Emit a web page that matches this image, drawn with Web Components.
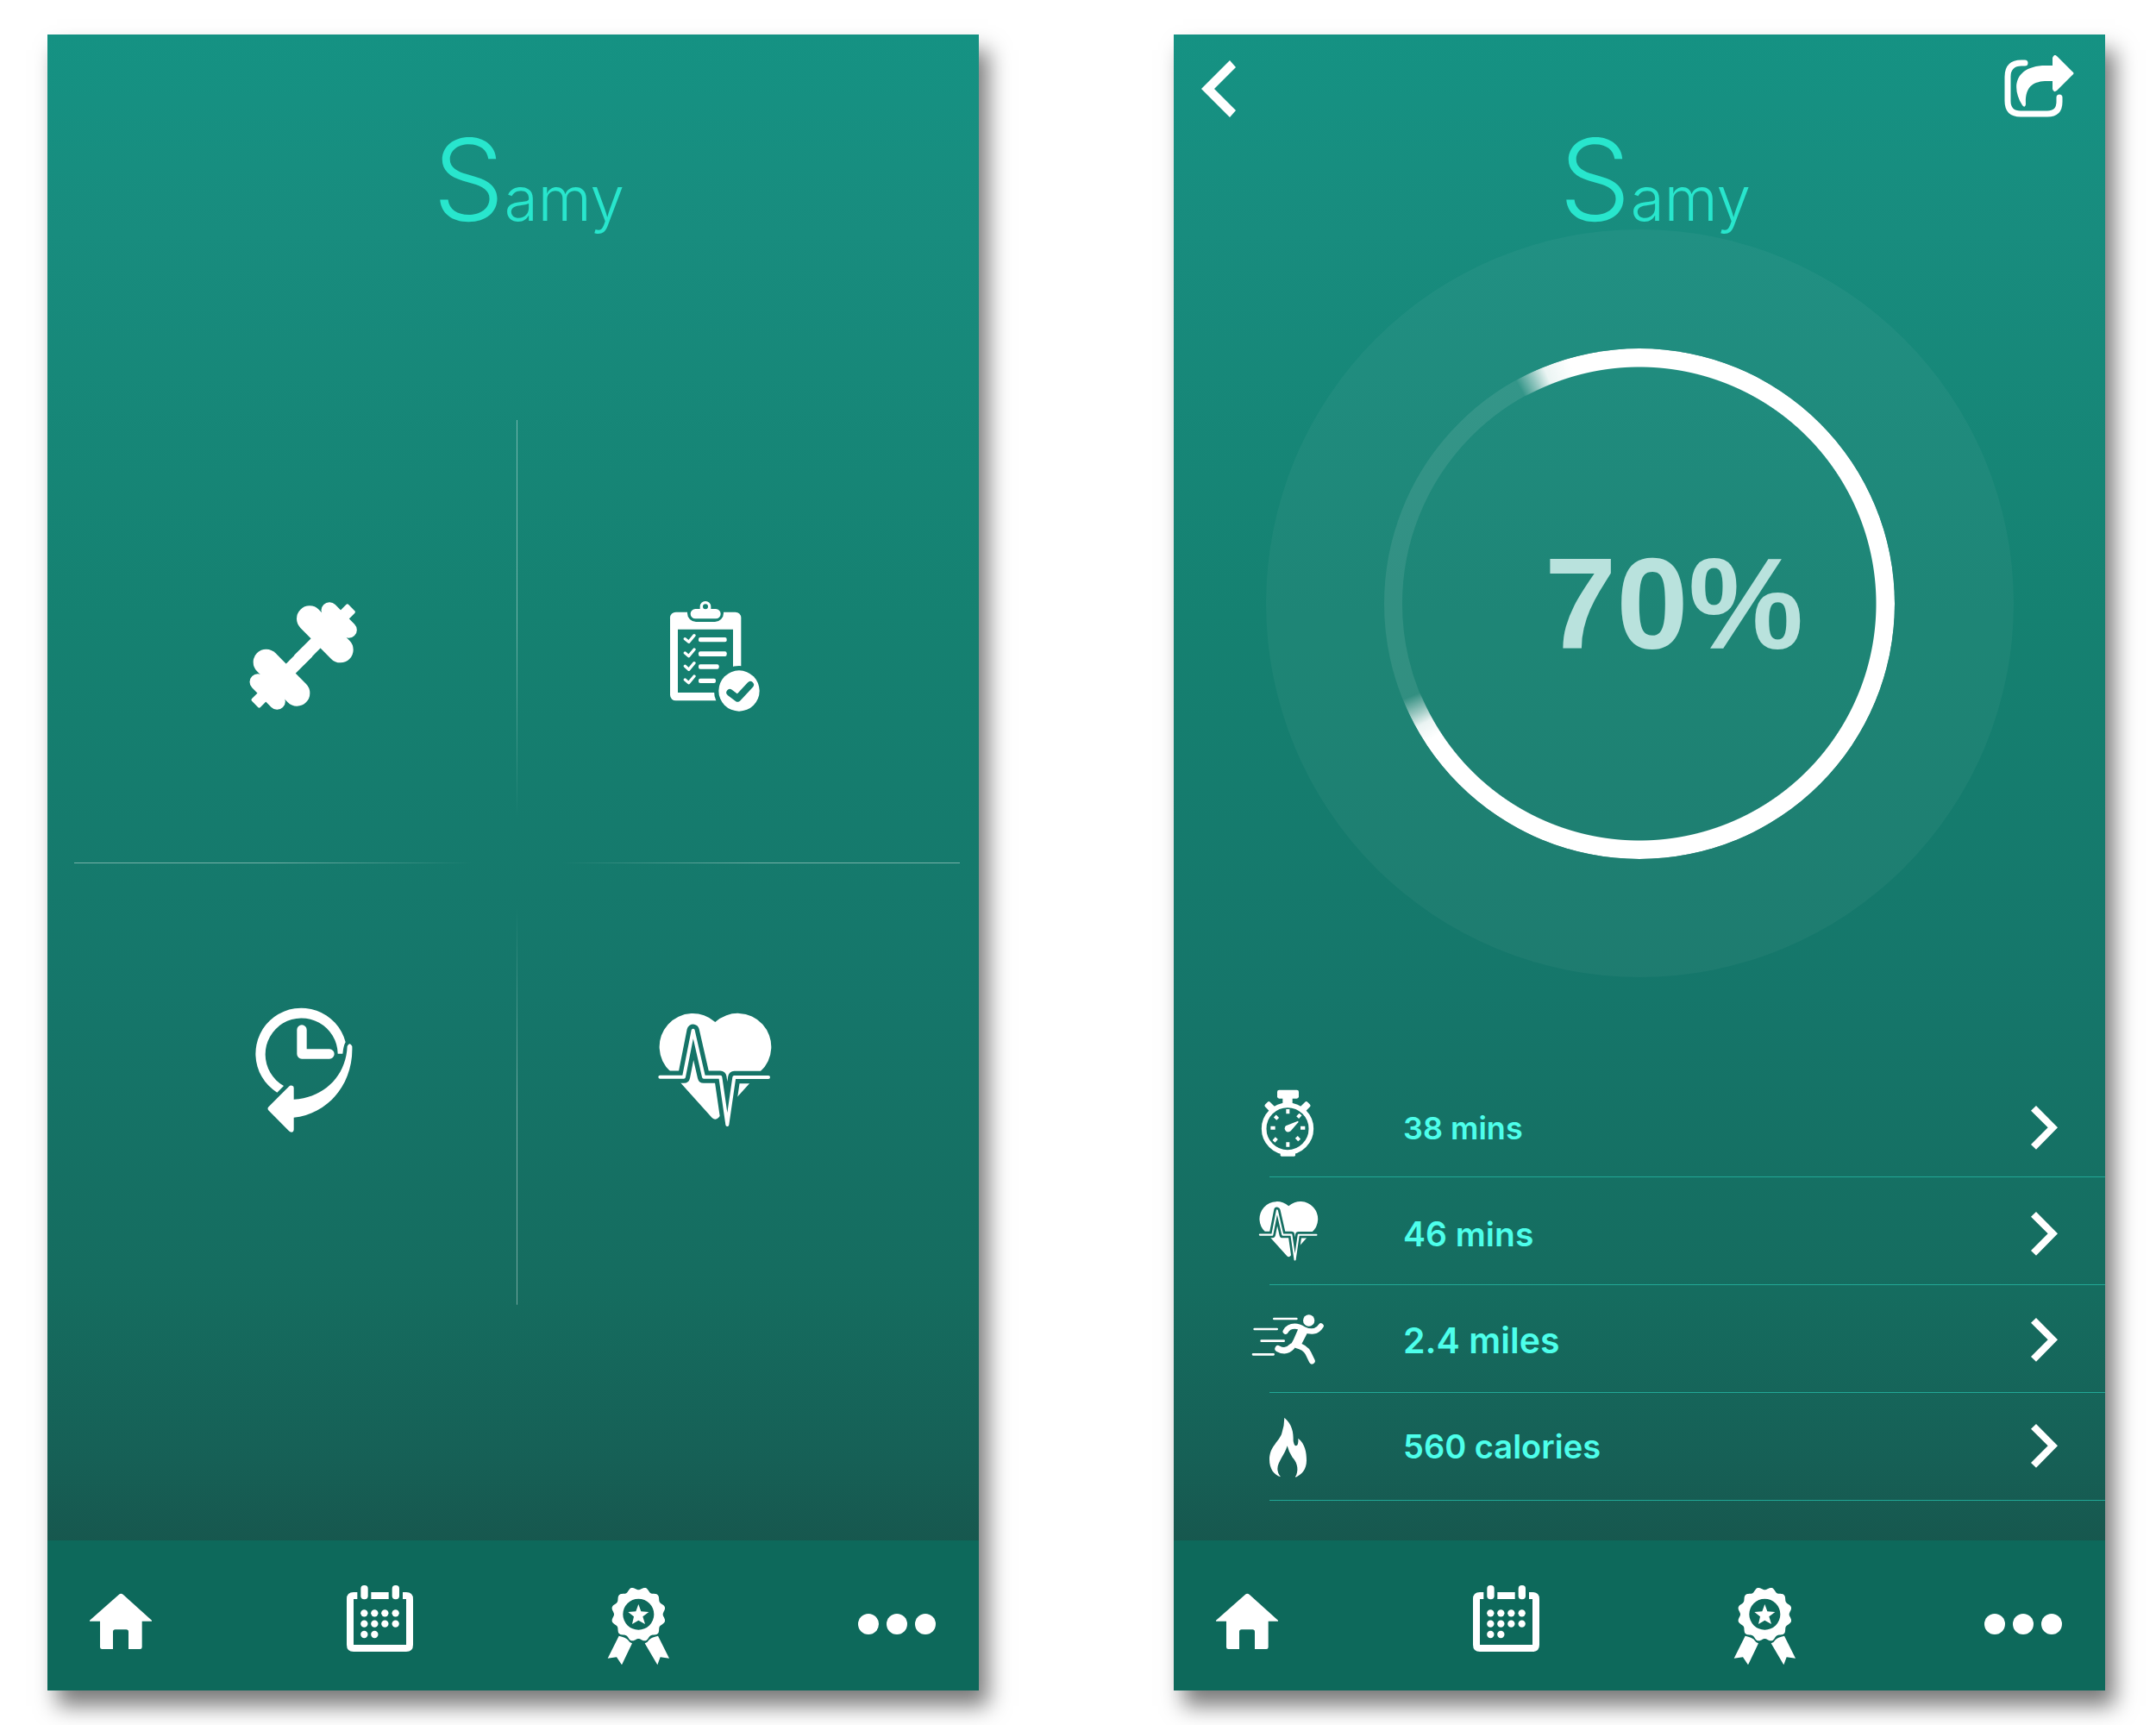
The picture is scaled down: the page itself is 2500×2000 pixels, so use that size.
<!DOCTYPE html>
<html lang="en">
<head>
<meta charset="utf-8">
<meta name="viewport" content="width=device-width, initial-scale=1">
<title>Samy</title>
<style>
  body {
    margin: 0;
    background: #fff;
    font-family: Inter, "Liberation Sans", sans-serif;
  }
  main {
    display: flex;
    gap: 226px;
    padding: 40px 59px 40px 55px;
  }
</style>
</head>
<body>
<main>
  <app-screen>
    <app-title slot="top" initial="S">amy</app-title>
    <quick-menu></quick-menu>
  </app-screen>
  <app-screen nav="back">
    <app-title slot="top" initial="S">amy</app-title>
    <progress-gauge>70%</progress-gauge>
    <stat-list>
      <stat-row icon="stopwatch" size="s">38 mins</stat-row>
      <stat-row icon="heart" size="l">46 mins</stat-row>
      <stat-row icon="runner" size="xl">2.4 miles</stat-row>
      <stat-row icon="flame" size="m">560 calories</stat-row>
    </stat-list>
  </app-screen>
</main>

<script>
/* Outline of the award rosette: a circle with twelve soft lobes. */
function rosette(cx, cy, r, depth) {
  let d = "";
  for (let i = 0; i < 240; i++) {
    const t = i / 240 * Math.PI * 2;
    const k = r - depth * Math.cos(12 * t);
    d += (i ? "L" : "M") + (cx + k * Math.sin(t)).toFixed(1) + " " + (cy - k * Math.cos(t)).toFixed(1);
  }
  return d + "Z";
}

const heartArt = `
  <mask id="h" maskUnits="userSpaceOnUse" x="0" y="0" width="560" height="560">
    <rect width="560" height="560" fill="#fff"/>
    <path d="M40 297H159L191 135L228 297H286L310 463L334 298H500" fill="none" stroke="#000" stroke-width="43" stroke-linejoin="round"/>
  </mask>
  <path mask="url(#h)" d="M268 106A116 116 0 0 0 112 278L257 439Q268 450 279 439L425 278A116 116 0 0 0 268 106Z"/>
  <path d="M76 297H159L191 135L228 297H286L310 463L334 298H453" fill="none" stroke="#fff" stroke-width="12" stroke-linejoin="round" stroke-linecap="round"/>`;

const ICONS = {
  dumbbell: { box: "6 3 540 540", art: `
    <g id="d" stroke="#fff" stroke-linecap="round">
      <path d="M297 145L404 253" stroke-width="90"/>
      <path d="M366 116L433 184" stroke-width="57"/>
      <rect x="-42" y="-21" width="72" height="42" rx="6" stroke="none" transform="translate(422 128) rotate(-45)"/>
      <path d="M260 289L350 199" stroke-width="47" stroke-linecap="butt"/>
    </g>
    <use href="#d" transform="rotate(180 275 274.500)"/>` },
  clipboard: { box: "-36 -27 540 540", art: `
    <mask id="b" maskUnits="userSpaceOnUse" x="0" y="0" width="480" height="480">
      <rect width="480" height="480" fill="#fff"/>
      <path d="M108 152H300V372H108Z" fill="#000"/>
      <rect x="141" y="50" width="126" height="76" rx="30" fill="#000"/>
      <circle cx="321" cy="366" r="87" fill="#000"/>
    </mask>
    <mask id="t" maskUnits="userSpaceOnUse" x="0" y="0" width="480" height="480">
      <rect width="480" height="480" fill="#fff"/>
      <path d="M289 372L316 392L360 345" fill="none" stroke="#000" stroke-width="24" stroke-linecap="round" stroke-linejoin="round"/>
    </mask>
    <rect mask="url(#b)" x="81" y="92" width="247" height="308" rx="20"/>
    <path fill-rule="evenodd" d="M185 81V73A19 19 0 0 1 223 73V81H240A17 17 0 0 1 240 115H169A17 17 0 0 1 169 81ZM195 73A9 9 0 1 0 213 73A9 9 0 1 0 195 73Z"/>
    <g fill="none" stroke="#fff" stroke-width="10" stroke-linecap="round" stroke-linejoin="round">
      <path d="M133 185L146 196L165 173M133 234L146 245L165 222M133 280L146 292L165 269M133 327L146 338L165 315"/>
    </g>
    <rect x="180" y="180" width="98" height="16" rx="6"/>
    <rect x="180" y="229" width="98" height="17" rx="6"/>
    <rect x="180" y="274" width="71" height="16" rx="6"/>
    <rect x="180" y="323" width="60" height="16" rx="6"/>
    <circle mask="url(#t)" cx="321" cy="366" r="71"/>` },
  history: { box: "-26 1 540 540", art: `
    <path d="M152 351A159 159 0 1 1 390 176Q383 188 380 216H363A126 126 0 1 0 175 328Z"/>
    <path d="M238 133V217H334" fill="none" stroke="#fff" stroke-width="34" stroke-linecap="round" stroke-linejoin="round"/>
    <path d="M396 190Q404 174 413 190C418 325 325 427 210 438V480Q209 489 202 489Q197 489 193 485L121 412Q118 407 121 402L193 330Q198 325 204 327Q210 328 210 335V375C312 370 392 296 396 190Z"/>` },
  heartMenu: { box: "-6 1 540 540", art: heartArt },
  heart: { box: "8 35 517 517", art: heartArt },
  stopwatch: { box: "87 67 270 270", art: `
    <circle cx="219" cy="204" r="82" fill="none" stroke="#fff" stroke-width="17"/>
    <rect x="183" y="69" width="75" height="30" rx="7"/>
    <rect x="202" y="96" width="34" height="24"/>
    <rect x="-15" y="-12" width="40" height="24" rx="6" transform="translate(156 126) rotate(45)"/>
    <rect x="-15" y="-12" width="40" height="24" rx="6" transform="translate(282 126) rotate(135)"/>
    <rect x="194" y="282" width="52" height="18" rx="4"/>
    <path fill="none" stroke="#fff" stroke-width="12" d="M220 136V152M220 251V267M160 201H176M264 201H280M175 160L185 170M264 154L254 165M171 248L181 237M260 244L250 233"/>
    <path d="M255 177Q258 177 256 182L230 212A12 12 0 1 1 213 194Z"/>` },
  runner: { box: "87 55 270 270", art: `
    <circle cx="293" cy="121" r="20"/>
    <g fill="none" stroke="#fff" stroke-linecap="round" stroke-linejoin="round">
      <path d="M172 115H250M104 151H182M128 192H206M99 239H170" stroke-width="8"/>
      <path d="M212 159Q222 141 244 141Q258 141 276 152Q316 170 335 140" stroke-width="19"/>
      <path d="M186 219Q214 234 234 212" stroke-width="22"/>
      <path d="M250 207Q280 214 291 235L304 262" stroke-width="21"/>
    </g>
    <path d="M256 150L290 160L268 203Q256 214 245 214Q232 220 222 212Q234 202 240 187Z"/>` },
  flame: { box: "87 424 270 270", art: `
    <path d="M208 459C235 482 240 510 239 540Q242 557 248 557Q258 555 256 531C280 550 285 580 285 608C285 640 268 657 248 666C245 664 246 662 249 660C260 632 248 610 236 597Q223 578 218 557C208 590 185 612 184 637Q184 652 195 665C170 658 156 635 156 605C157 560 184 548 198 517Q208 488 208 459Z"/>` },
  home: { box: "150 99 300 360", art: `
    <path d="M192 296L293 207Q301 200 309 207L408 296V299H374V389Q374 396 367 396H327V336Q327 328 319 328H281Q273 328 273 336V396H235Q228 396 228 389V299H192Z"/>` },
  calendar: { box: "1050 99 300 360", art: `
    <path d="M1123 198H1110Q1086 198 1086 222V381Q1086 405 1110 405H1293Q1317 405 1317 381V222Q1317 198 1293 198H1281V222H1293V381H1110V222H1123Z"/>
    <rect x="1171" y="198" width="61" height="24"/>
    <rect x="1135" y="174" width="25" height="49" rx="12"/>
    <rect x="1244" y="174" width="25" height="49" rx="12"/>
    ${[[271, 4], [308, 4], [345, 2]].map(([y, n]) =>
      [1147, 1183, 1219, 1256].slice(0, n).map(x => `<circle cx="${x}" cy="${y}" r="12.500"/>`).join("")).join("")}` },
  award: { box: "90 99 300 360", art: `
    <path fill-rule="evenodd" d="${rosette(241, 275, 90, 5)}M187 275A54 54 0 1 0 295 275A54 54 0 1 0 187 275Z"/>
    <path d="M241 240L250 265L277 267L256 283L264 309L241 296L219 309L225 283L205 267L232 265Z"/>
    <path d="M173 350L134 428L165 424L183 451L219 376Q209 373 204 364Q197 355 173 350Z"/>
    <path d="M309 350L348 428L317 424L307 451L263 376Q273 373 278 364Q285 355 309 350Z"/>` },
  more: { box: "990 99 300 360", art: `
    <circle cx="1041" cy="309" r="36"/><circle cx="1140" cy="309" r="36"/><circle cx="1239" cy="309" r="36"/>` },
  back: { box: "0 0 40 66", art: `<path d="M33 0L40 8L15 33L40 58L33 66L0 33Z"/>` },
  share: { box: "0 0 81 72", art: `
    <path d="M24 9H20Q4 9 4 25V53Q4 68 19 68H50Q64 68 64 54V49" fill="none" stroke="#fff" stroke-width="7" stroke-linecap="round"/>
    <path d="M56 3Q58 -2 61 1L79 19Q82 21 79 23L61 41Q57 44 56 39V30H47C32 31 24 38 25 57Q24 62 21 58C6 34 16 12 48 12H56Z"/>` },
  chevron: { box: "225 126 93 153", art: `<path d="M243 126L318 202L243 278L225 261L284 202L225 143Z"/>` }
};

function define(name, markup) {
  customElements.define(name, class extends HTMLElement {
    connectedCallback() {
      if (this.shadowRoot) return;
      this.attachShadow({ mode: "open" }).innerHTML = markup(this);
    }
  });
}

define("app-icon", el => {
  const icon = ICONS[el.getAttribute("name")];
  return `
    <style>
      :host { display: block; flex: none; }
      svg { display: block; width: 100%; height: 100%; fill: #fff; }
    </style>
    <svg viewBox="${icon.box}" aria-hidden="true">${icon.art}</svg>`;
});

define("app-title", el => `
  <style>
    :host { display: block; }
    h1 {
      margin: 0;
      padding-left: 36px;
      font-size: 131px;
      font-weight: 300;
      line-height: 145px;
      color: #28e6cd;
      text-align: center;
    }
    span { font-size: 71px; line-height: 1; }
  </style>
  <h1>${el.getAttribute("initial")}<span><slot></slot></span></h1>`);

define("app-screen", el => `
  <style>
    :host {
      display: flex;
      flex-direction: column;
      flex: 1;
      min-width: 0;
      aspect-ratio: 9 / 16;
      background: linear-gradient(#159283 0%, #188c7e 12%, #158171 35%, #15766a 58%, #156c5f 76%, #166056 86%, #17544b 93%);
      box-shadow: 11px 18px 24px rgba(0, 0, 0, .52);
    }
    header {
      display: flex;
      align-items: flex-end;
      justify-content: space-between;
      height: 72px;
      padding: 24px 36px 0 32px;
    }
    button { padding: 0; border: 0; background: none; }
    .back { width: 40px; height: 66px; }
    .share { width: 81px; height: 72px; }
    app-icon { width: 100%; height: 100%; }
    tab-bar { margin-top: auto; }
  </style>
  <header>${el.getAttribute("nav") === "back" ? `
    <button class="back" aria-label="Back"><app-icon name="back"></app-icon></button>
    <button class="share" aria-label="Share"><app-icon name="share"></app-icon></button>` : ""}
  </header>
  <slot name="top"></slot>
  <slot></slot>
  <tab-bar></tab-bar>`);

define("quick-menu", () => `
  <style>
    :host { display: block; margin: 206px 22px 0 31px; }
    nav {
      --line: rgba(255, 255, 255, .42);
      display: grid;
      grid-template-columns: 1fr 1fr;
      grid-auto-rows: 480px;
      padding: 33px 47px 33px 28px;
      background:
        linear-gradient(to right, var(--line) 50%, transparent) left center / 45% 1px no-repeat,
        linear-gradient(to left, var(--line) 50%, transparent) right center / 45% 1px no-repeat,
        linear-gradient(to bottom, var(--line) 50%, transparent) center top / 1px 45% no-repeat,
        linear-gradient(to top, var(--line) 50%, transparent) center bottom / 1px 45% no-repeat;
    }
    a { display: flex; align-items: center; justify-content: center; }
    app-icon { width: 180px; height: 180px; }
  </style>
  <nav>
    <a href="#workouts" aria-label="Workouts"><app-icon name="dumbbell"></app-icon></a>
    <a href="#plan" aria-label="Plan"><app-icon name="clipboard"></app-icon></a>
    <a href="#history" aria-label="History"><app-icon name="history"></app-icon></a>
    <a href="#heart" aria-label="Heart rate"><app-icon name="heartMenu"></app-icon></a>
  </nav>`);

define("progress-gauge", () => `
  <style>
    :host {
      display: block;
      width: 867px;
      max-width: 100%;
      margin: -15px auto 0;
    }
    .disc, .track, .value { border-radius: 50%; display: grid; }
    .disc { aspect-ratio: 1; place-items: center; background: rgba(255, 255, 255, .04); }
    .track, .value { grid-area: 1 / 1; width: 592px; height: 592px; box-sizing: border-box; }
    .track { border: 21px solid rgba(255, 255, 255, .09); }
    .value {
      background: conic-gradient(#fff 237deg, rgba(255,255,255,.9) 241deg, rgba(255,255,255,.5) 244deg,
        transparent 248deg, transparent 331deg, rgba(255,255,255,.5) 335deg, rgba(255,255,255,.9) 338deg, #fff 344deg);
      -webkit-mask: radial-gradient(closest-side, transparent 274px, #000 275px);
      mask: radial-gradient(closest-side, transparent 274px, #000 275px);
    }
    p {
      grid-area: 1 / 1;
      margin: 0;
      padding-left: 80px;
      font-family: "Liberation Sans", Arial, sans-serif;
      font-size: 150px;
      line-height: 1;
      font-weight: 700;
      color: #b9e2dd;
    }
  </style>
  <div class="disc">
    <div class="track"></div>
    <div class="value"></div>
    <p><slot></slot></p>
  </div>`);

define("stat-list", () => `
  <style>
    :host { display: block; margin-top: 113px; }
    div {
      padding-bottom: 4px;
      background: linear-gradient(transparent 118px, #21a896 118px, #21a896 119px, transparent 119px) 111px 0 / 100% 125px repeat-y;
    }
  </style>
  <div role="list"><slot></slot></div>`);

define("stat-row", el => `
  <style>
    :host { display: block; }
    a {
      display: flex;
      align-items: center;
      height: 123px;
      padding: 0 55px 0 88px;
      color: #4dffeb;
      font-weight: 600;
      text-decoration: none;
    }
    .icon { width: 90px; height: 90px; margin-right: 88px; }
    .go { width: 31px; height: 51px; margin-left: auto; }
    .s { font-size: 36px; }
    .m { font-size: 38px; }
    .l { font-size: 39px; }
    .xl { font-size: 41px; }
  </style>
  <a href="#${el.getAttribute("icon")}">
    <app-icon class="icon" name="${el.getAttribute("icon")}"></app-icon>
    <span class="${el.getAttribute("size")}"><slot></slot></span>
    <app-icon class="go" name="chevron"></app-icon>
  </a>`);

define("tab-bar", () => `
  <style>
    :host { display: block; }
    nav {
      display: flex;
      align-items: center;
      justify-content: space-between;
      height: 174px;
      padding: 0 45px 0 35px;
      background: #0d695b;
    }
    app-icon { width: 100px; height: 120px; }
  </style>
  <nav>
    <a href="#home" aria-label="Home"><app-icon name="home"></app-icon></a>
    <a href="#calendar" aria-label="Calendar"><app-icon name="calendar"></app-icon></a>
    <a href="#awards" aria-label="Awards"><app-icon name="award"></app-icon></a>
    <a href="#more" aria-label="More"><app-icon name="more"></app-icon></a>
  </nav>`);
</script>
</body>
</html>
